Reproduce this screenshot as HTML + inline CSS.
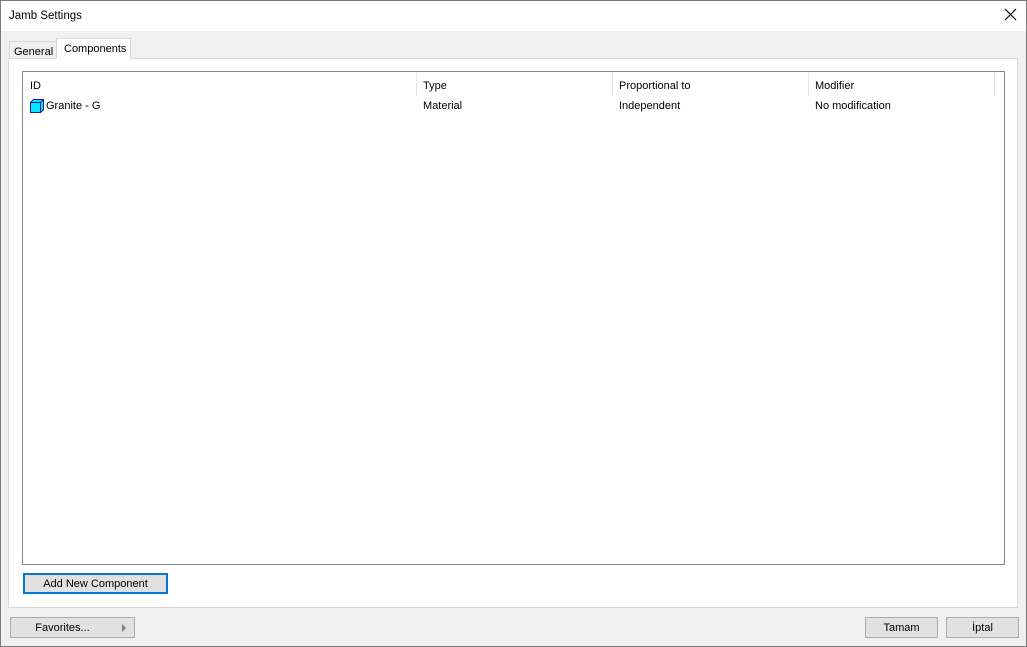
<!DOCTYPE html>
<html><head><meta charset="utf-8"><style>
*{margin:0;padding:0;box-sizing:border-box}
body{width:1027px;height:647px;overflow:hidden;font-family:"Liberation Sans",Arial,sans-serif;font-size:11px;color:#000;background:#f0f0f0;position:relative}
.frame{position:absolute;left:0;top:0;width:1027px;height:647px;border:1px solid #7a7a7a;z-index:10;pointer-events:none}
.title{position:absolute;left:0;top:0;width:1027px;height:31px;background:#fff}
.title span{position:absolute;left:9px;top:10px;font-size:11.5px}
.abs{position:absolute}
.tab{position:absolute;border:1px solid #d9d9d9;border-bottom:none;background:#f0f0f0;font-size:11px;white-space:nowrap;overflow:hidden}
.panel{position:absolute;left:8px;top:58px;width:1010px;height:550px;background:#fff;border:1px solid #d9d9d9}
.list{position:absolute;left:22px;top:71px;width:983px;height:494px;border:1px solid #828790;background:#fff}
.hdr{position:absolute;top:1px;height:23px;border-left:1px solid #e5e5e5}
.btn{position:absolute;background:#e1e1e1;border:1px solid #adadad;text-align:center;font-size:11px}
</style></head><body>
<div class="title"><span>Jamb Settings</span>
<svg class="abs" style="left:1004px;top:8px" width="13" height="13" viewBox="0 0 13 13"><path d="M1 1L12 12M12 1L1 12" stroke="#000" stroke-width="1.2"/></svg></div>
<div class="tab" style="left:9px;top:41px;width:48px;height:18px"><span class="abs" style="left:4px;top:4px">General</span></div>
<div class="panel"></div>
<div class="tab" style="left:56px;top:38px;width:75px;height:21px;background:#fff;z-index:2"><span class="abs" style="left:7px;top:4px">Components</span></div>
<div class="list">
<span class="abs" style="left:7px;top:8px">ID</span>
<div class="hdr" style="left:393px"></div><span class="abs" style="left:400px;top:8px">Type</span>
<div class="hdr" style="left:589px"></div><span class="abs" style="left:596px;top:8px">Proportional to</span>
<div class="hdr" style="left:785px"></div><span class="abs" style="left:792px;top:8px">Modifier</span>
<div class="hdr" style="left:971px"></div>
<svg class="abs" style="left:6px;top:26px" width="16" height="15" viewBox="0 0 16 15"><path d="M1.5 4.5L4.5 1.5H14.5V11.5L11.5 14.5H1.5Z" fill="#00e8ff" stroke="#1a1a8a"/><path d="M1.5 4.5H11.5V14.5M11.5 4.5L14.5 1.5" fill="none" stroke="#1a1a8a"/></svg>
<span class="abs" style="left:23px;top:28px">Granite - G</span>
<span class="abs" style="left:400px;top:28px">Material</span>
<span class="abs" style="left:596px;top:28px">Independent</span>
<span class="abs" style="left:792px;top:28px">No modification</span>
</div>
<div class="btn" style="left:23px;top:573px;width:145px;height:21px;border:2px solid #0078d7;line-height:19px">Add New Component</div>
<div class="btn" style="left:10px;top:617px;width:125px;height:21px;line-height:21px"><span style="position:relative;left:-10px">Favorites...</span>
<svg class="abs" style="left:111px;top:6px" width="5" height="8"><path d="M0 0L4 4L0 8Z" fill="#808080"/></svg></div>
<div class="btn" style="left:865px;top:617px;width:73px;height:21px;line-height:21px">Tamam</div>
<div class="btn" style="left:946px;top:617px;width:73px;height:21px;line-height:21px">İptal</div>
<div class="frame"></div>
</body></html>
